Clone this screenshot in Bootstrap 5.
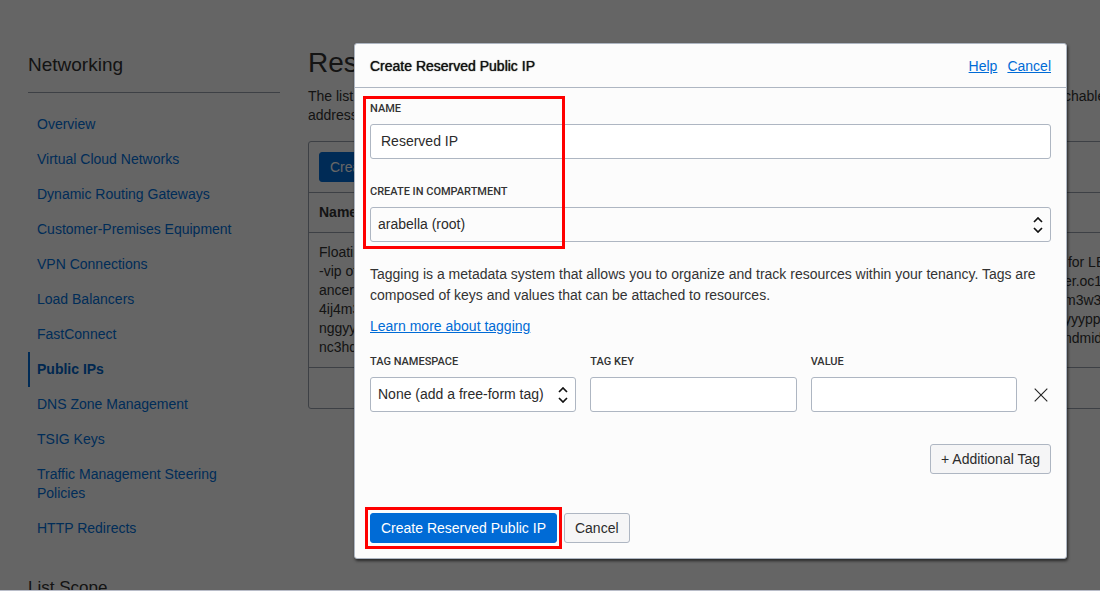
<!DOCTYPE html>
<html lang="en">
<head>
<meta charset="utf-8">
<meta name="viewport" content="width=device-width, initial-scale=1">
<title>Create Reserved Public IP</title>
<link href="https://cdn.jsdelivr.net/npm/bootstrap@5.3.0/dist/css/bootstrap.min.css" rel="stylesheet">
<style>
  body {
    font-family: "Liberation Sans", Arial, sans-serif;
    font-size: 14px;
    line-height: 19px;
    color: #333;
    background: #fcfcfc;
  }
  a { color: #006bd6; }
  .console { border-bottom: 1px solid #b9bdc9; }

  /* Page behind the dialog */
  .sidebar { width: 280px; padding: 53px 0 0 28px; }
  .sidebar h2 { font-size: 17px; line-height: 24px; font-weight: 400; margin: 0; }
  .sidebar .section-title { font-size: 19px; padding-bottom: 15px; margin-bottom: 14px; border-bottom: 1px solid #98a0ac; }
  .side-nav .nav-link { padding: 8px 40px 8px 7px; border-left: 2px solid transparent; color: #0070dc; }
  .side-nav .nav-link.active { border-color: #006bd6; font-weight: 700; color: #0064c8; }
  .side-nav { margin-bottom: 30px; }
  .content { padding: 47px 0 0 28px; min-width: 1000px; }
  .content h1 { font-size: 28px; line-height: 32px; font-weight: 400; margin: 0 0 8px; }
  .intro { margin-bottom: 16px; }
  .intro .lead-in { width: 756px; }
  .ip-table .name-col { width: 755px; }
  .panel { --bs-card-bg: transparent; --bs-card-border-color: #98a0ac; --bs-card-border-radius: 3px; color: #333; }
  .panel-bar { padding: 10px; border-bottom: 1px solid #98a0ac; }
  .ip-table { --bs-table-bg: transparent; --bs-table-color: #333; table-layout: fixed; margin: 0; }
  .ip-table > :not(caption) > * > * { padding: 10px; border-bottom: 1px solid #98a0ac; vertical-align: middle; white-space: nowrap; }
  .ip-table > tbody > tr > td + td { padding-left: 0; }
  .panel-foot { height: 40px; }
  .shade { background: rgba(0, 0, 0, .6); }

  /* Buttons */
  .btn {
    --bs-btn-font-size: 14px;
    --bs-btn-line-height: 20px;
    --bs-btn-padding-x: 10px;
    --bs-btn-padding-y: 4px;
    --bs-btn-border-radius: 3px;
  }
  .btn-primary { --bs-btn-bg: #006bd6; --bs-btn-border-color: #006bd6; }
  .btn-light { --bs-btn-bg: #f5f5f6; --bs-btn-border-color: #aeb6c2; --bs-btn-color: #2b2b2b; }

  /* Dialog */
  .create-dialog { max-width: none; margin: 43px 33px 32px 354px; }
  .create-dialog .modal-content {
    color: #333;
    background: #fcfcfc;
    border: 1px solid #aeb6c2;
    border-radius: 3px;
    box-shadow: 1px 2px 3px rgba(0, 0, 0, .6);
  }
  .create-dialog .modal-header { padding: 12px 15px 11px; border-bottom: 1px solid #aeb6c2; }
  .create-dialog .modal-title { font-size: 14px; line-height: 20px; font-weight: 400; color: #111; text-shadow: 0 0 1px #111; }
  .header-links { gap: 10px; padding-top: 1px; }
  .create-dialog .modal-body { padding: 12px 15px 15px; }
  .form-label { display: block; font-family: Roboto, sans-serif; font-size: 11px; font-weight: 500; line-height: 18px; margin: 0 0 6px; text-transform: uppercase; }
  .form-control, .form-select {
    height: 35px;
    font-size: 14px;
    line-height: 19px;
    padding: 6px 10px 8px;
    color: #2b2b2b;
    background-color: #fff;
    border: 1px solid #aeb6c2;
    border-radius: 3px;
  }
  .form-select {
    padding: 7px 24px 7px 7px;
    background-image: url("data:image/svg+xml,%3Csvg xmlns='http://www.w3.org/2000/svg' viewBox='0 0 10 16'%3E%3Cpath d='M1 5l4-4 4 4M1 11l4 4 4-4' fill='none' stroke='%23111' stroke-width='1.7'/%3E%3C/svg%3E");
    background-size: 10px 16px;
    background-position: right 7px center;
  }
  .form-select.muted-fill { background-color: #fcfcfc; }
  .tag-copy { line-height: 21px; margin: 22px 0 10px; }
  .tag-row { gap: 14px; margin-top: 16px; }
  .tag-actions { margin: 32px 0 39px; }
  .submit-row { gap: 7px; }
  .tag-remove { width: 20px; height: 35px; }
  .callout { border: 3px solid #f00; pointer-events: none; }
  .callout-fields { top: -4px; left: -7px; bottom: -7px; width: 202px; }
  .callout-submit { inset: -6px -5px; }
</style>
</head>
<body>
<div class="console position-relative vh-100 overflow-hidden">
  <div class="d-flex">
    <aside class="sidebar flex-shrink-0">
      <h2 class="section-title">Networking</h2>
      <nav class="side-nav nav flex-column" aria-label="Networking">
        <a class="nav-link" href="#">Overview</a>
        <a class="nav-link" href="#">Virtual Cloud Networks</a>
        <a class="nav-link" href="#">Dynamic Routing Gateways</a>
        <a class="nav-link" href="#">Customer-Premises Equipment</a>
        <a class="nav-link" href="#">VPN Connections</a>
        <a class="nav-link" href="#">Load Balancers</a>
        <a class="nav-link" href="#">FastConnect</a>
        <a class="nav-link active" href="#" aria-current="page">Public IPs</a>
        <a class="nav-link" href="#">DNS Zone Management</a>
        <a class="nav-link" href="#">TSIG Keys</a>
        <a class="nav-link" href="#">Traffic Management Steering Policies</a>
        <a class="nav-link" href="#">HTTP Redirects</a>
      </nav>
      <h2>List Scope</h2>
    </aside>

    <main class="content flex-grow-1">
      <h1>Res</h1>
      <div class="intro d-flex">
        <div class="lead-in">The list<br>address</div>
        <div>chable</div>
      </div>
      <div class="panel card">
        <div class="panel-bar"><button type="button" class="btn btn-primary">Create</button></div>
        <table class="ip-table table">
          <thead><tr><th class="name-col" scope="col">Name</th><th scope="col"></th></tr></thead>
          <tbody>
            <tr>
              <td>Floating<br>-vip of<br>ancer<br>4ij4m3<br>nggyyy<br>nc3hd</td>
              <td>&nbsp;for LB<br>er.oc1<br>m3w3<br>yyypp<br>ndmid</td>
            </tr>
          </tbody>
        </table>
        <div class="panel-foot"></div>
      </div>
    </main>
  </div>

  <div class="shade position-absolute top-0 start-0 w-100 h-100">
    <div class="create-dialog modal-dialog" role="dialog" aria-modal="true" aria-labelledby="dialogTitle">
      <div class="modal-content">
        <div class="modal-header">
          <h1 class="modal-title" id="dialogTitle">Create Reserved Public IP</h1>
          <div class="header-links d-flex"><a href="#">Help</a><a href="#">Cancel</a></div>
        </div>
        <form class="modal-body">
          <div class="position-relative">
            <div class="mb-4">
              <label class="form-label" for="ipName">Name</label>
              <input class="form-control" id="ipName" type="text" value="Reserved IP">
            </div>
            <div>
              <label class="form-label" for="compartment">Create in compartment</label>
              <select class="form-select muted-fill" id="compartment"><option>arabella (root)</option></select>
            </div>
            <div class="callout callout-fields position-absolute"></div>
          </div>

          <p class="tag-copy">Tagging is a metadata system that allows you to organize and track resources within your tenancy. Tags are composed of keys and values that can be attached to resources.</p>
          <a class="d-inline-block tag-copy my-0" href="#">Learn more about tagging</a>

          <div class="tag-row d-flex align-items-end">
            <div class="flex-fill w-100">
              <label class="form-label" for="tagNamespace">Tag namespace</label>
              <select class="form-select" id="tagNamespace"><option>None (add a free-form tag)</option></select>
            </div>
            <div class="flex-fill w-100">
              <label class="form-label" for="tagKey">Tag key</label>
              <input class="form-control" id="tagKey" type="text">
            </div>
            <div class="flex-fill w-100">
              <label class="form-label" for="tagValue">Value</label>
              <input class="form-control" id="tagValue" type="text">
            </div>
            <button type="button" class="tag-remove btn p-0 border-0 flex-shrink-0" aria-label="Remove tag">
              <svg class="d-block mx-auto" width="14" height="14" viewBox="0 0 14 14" fill="none" stroke="#222" stroke-width="1.1" aria-hidden="true"><path d="M.7.7l12.6 12.6M13.3.7L.7 13.3"/></svg>
            </button>
          </div>

          <div class="tag-actions d-flex justify-content-end">
            <button type="button" class="btn btn-light">+ Additional Tag</button>
          </div>

          <div class="submit-row d-flex">
            <div class="position-relative">
              <button type="submit" class="btn btn-primary">Create Reserved Public IP</button>
              <div class="callout callout-submit position-absolute"></div>
            </div>
            <button type="button" class="btn btn-light">Cancel</button>
          </div>
        </form>
      </div>
    </div>
  </div>
</div>
<script src="https://cdn.jsdelivr.net/npm/bootstrap@5.3.0/dist/js/bootstrap.bundle.min.js"></script>
</body>
</html>
